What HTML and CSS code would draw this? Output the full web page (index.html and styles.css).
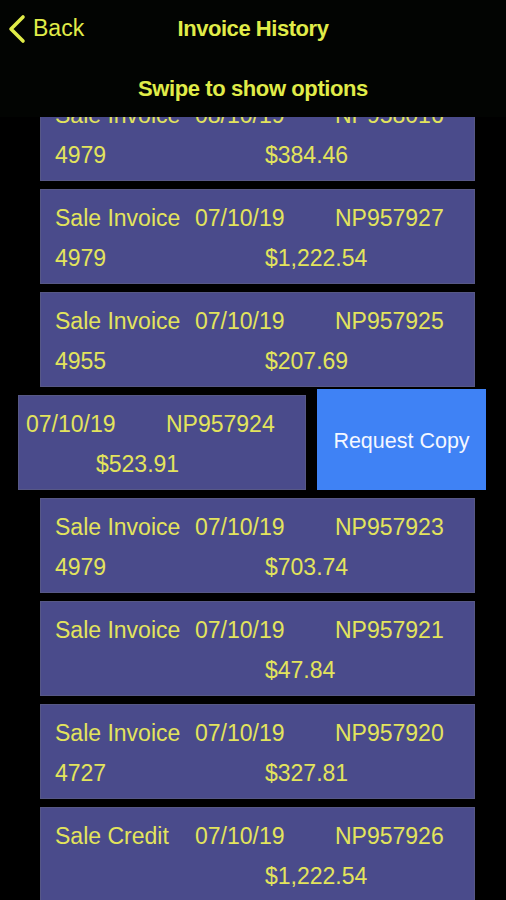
FILE: index.html
```html
<!DOCTYPE html>
<html lang="en">
    <head>
        <meta charset="utf-8">
        <link rel="stylesheet" href="styles.css">
    </head>
    <body>
        <div class="screen">
            <div class="header">
                <div class="nav">
                    <div class="back">
                        <svg class="chevron" width="20" height="30" viewBox="0 0 20 30">
                            <polyline points="15,3 3,15 15,27" fill="none" stroke="#e0ec48" stroke-width="3.6" stroke-linecap="round" stroke-linejoin="round"/>
                        </svg>
                        <span>Back</span>
                    </div>
                    <div class="title">Invoice History</div>
                    <div></div>
                </div>
                <div class="hint">Swipe to show options</div>
            </div>

            <div class="list">
                <div class="card">
                    <div class="row top"><span>Sale Invoice</span><span>08/10/19</span><span>NP958016</span></div>
                    <div class="row bottom"><span>4979</span><span>$384.46</span></div>
                </div>
                <div class="card">
                    <div class="row top"><span>Sale Invoice</span><span>07/10/19</span><span>NP957927</span></div>
                    <div class="row bottom"><span>4979</span><span>$1,222.54</span></div>
                </div>
                <div class="card">
                    <div class="row top"><span>Sale Invoice</span><span>07/10/19</span><span>NP957925</span></div>
                    <div class="row bottom"><span>4955</span><span>$207.69</span></div>
                </div>
                <div class="swipe-row">
                    <div class="card swiped">
                        <div class="row pair"><span>07/10/19</span><span>NP957924</span></div>
                        <div class="row amount"><span>$523.91</span></div>
                    </div>
                    <div class="action">Request Copy</div>
                </div>
                <div class="card">
                    <div class="row top"><span>Sale Invoice</span><span>07/10/19</span><span>NP957923</span></div>
                    <div class="row bottom"><span>4979</span><span>$703.74</span></div>
                </div>
                <div class="card">
                    <div class="row top"><span>Sale Invoice</span><span>07/10/19</span><span>NP957921</span></div>
                    <div class="row bottom"><span></span><span>$47.84</span></div>
                </div>
                <div class="card">
                    <div class="row top"><span>Sale Invoice</span><span>07/10/19</span><span>NP957920</span></div>
                    <div class="row bottom"><span>4727</span><span>$327.81</span></div>
                </div>
                <div class="card">
                    <div class="row top"><span>Sale Credit</span><span>07/10/19</span><span>NP957926</span></div>
                    <div class="row bottom"><span></span><span>$1,222.54</span></div>
                </div>
            </div>
        </div>
    </body>
</html>
```

FILE: styles.css
```css
* {
    box-sizing: border-box;
}

body {
    background-color: black;
    padding: 0px;
    margin: 0px;
    font-family: "Liberation Sans", Arial, sans-serif;
}

.screen {
    position: relative;
    width: 506px;
    height: 900px;
    overflow: hidden;
}

/* header sits over the scrolled list */
.header {
    position: absolute;
    top: 0px;
    left: 0px;
    right: 0px;
    height: 117px;
    background-color: #020402;
    color: #e0ec48;
    z-index: 2;
}

.nav {
    display: grid;
    grid-template-columns: 1fr auto 1fr;
    align-items: center;
    height: 57px;
}

.back {
    display: flex;
    align-items: center;
    padding-left: 8px;
    font-size: 23px;
}

.chevron {
    margin-right: 5px;
}

.title {
    font-size: 22px;
    font-weight: bold;
    letter-spacing: -0.45px;
}

.hint {
    display: flex;
    align-items: center;
    justify-content: center;
    height: 60px;
    padding-top: 3px;
    font-size: 22px;
    font-weight: bold;
    letter-spacing: -0.4px;
}

.list {
    display: flex;
    flex-direction: column;
    gap: 8px;
    padding: 86px 31px 0px 40px;
}

.card {
    height: 95px;
    flex-shrink: 0;
    padding: 8px 0px 0px 14px;
    background-color: #4a4b8b;
    border: 1px solid #575886;
    color: #e3e45c;
    font-size: 23px;
    line-height: 40px;
    white-space: nowrap;
}

.row {
    display: grid;
}

.row.top {
    grid-template-columns: 140px 140px 140px;
}

.row.bottom {
    grid-template-columns: 210px 210px;
}

.swipe-row {
    display: flex;
    gap: 11px;
    height: 95px;
    flex-shrink: 0;
    margin-left: -22px;
}

.card.swiped {
    width: 288px;
    padding-left: 7px;
}

.row.pair {
    grid-template-columns: 140px 140px;
}

.row.amount {
    padding-left: 70px;
}

.action {
    width: 169px;
    height: 101px;
    flex-shrink: 0;
    margin-top: -6px;
    padding-top: 4px;
    display: flex;
    align-items: center;
    justify-content: center;
    background-color: #3f82f5;
    color: #f4f7ff;
    font-size: 21.5px;
}
```
